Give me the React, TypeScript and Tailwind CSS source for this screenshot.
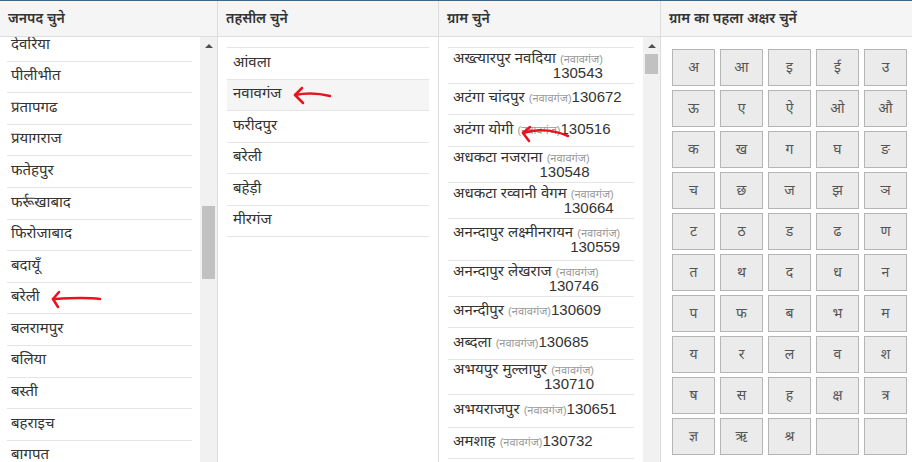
import React from "react";

const FONT = { fontFamily: '"Liberation Sans", "Noto Sans Devanagari", "Lohit Devanagari", "Noto Sans", sans-serif' };

const districts = [
  "देवरिया",
  "पीलीभीत",
  "प्रतापगढ",
  "प्रयागराज",
  "फतेहपुर",
  "फर्रूखाबाद",
  "फिरोजाबाद",
  "बदायूँ",
  "बरेली",
  "बलरामपुर",
  "बलिया",
  "बस्ती",
  "बहराइच",
  "बागपत",
];

const tehsils = ["आंवला", "नवावगंज", "फरीदपुर", "बरेली", "बहेड़ी", "मीरगंज"];

type Village = { name: string; code: string; wrap?: boolean; h: string };

const villages: Village[] = [
  { name: "अख्त्यारपुर नवदिया", code: "130543", wrap: true, h: "h-[36px]" },
  { name: "अटंगा चांदपुर", code: "130672", h: "h-[31px]" },
  { name: "अटंगा योगी", code: "130516", h: "h-[32px]" },
  { name: "अधकटा नजराना", code: "130548", wrap: true, h: "h-[36px]" },
  { name: "अधकटा रव्वानी वेगम", code: "130664", wrap: true, h: "h-[36px]" },
  { name: "अनन्दापुर लक्ष्मीनरायन", code: "130559", wrap: true, h: "h-[42px]" },
  { name: "अनन्दापुर लेखराज", code: "130746", wrap: true, h: "h-[36px]" },
  { name: "अनन्दीपुर", code: "130609", h: "h-[31px]" },
  { name: "अब्दला", code: "130685", h: "h-[32px]" },
  { name: "अभयपुर मुल्लापुर", code: "130710", wrap: true, h: "h-[35px]" },
  { name: "अभयराजपुर", code: "130651", h: "h-[33px]" },
  { name: "अमशाह", code: "130732", h: "h-[31px]" },
  { name: "अमानपुर", code: "130701", h: "h-[31px]" },
];

const letters = [
  "अ", "आ", "इ", "ई", "उ",
  "ऊ", "ए", "ऐ", "ओ", "औ",
  "क", "ख", "ग", "घ", "ङ",
  "च", "छ", "ज", "झ", "ञ",
  "ट", "ठ", "ड", "ढ", "ण",
  "त", "थ", "द", "ध", "न",
  "प", "फ", "ब", "भ", "म",
  "य", "र", "ल", "व", "श",
  "ष", "स", "ह", "क्ष", "त्र",
  "ज्ञ", "ऋ", "श्र", "", "",
];

function Header({ title }: { title: string }) {
  return (
    <div className="h-[36px] shrink-0 flex items-center px-2 bg-[#f5f5f5] border-b border-[#dddddd] text-[14px] font-semibold text-[#333]">
      {title}
    </div>
  );
}

// fake classic scrollbar
function ScrollBar({ thumbTop, thumbH }: { thumbTop: string; thumbH: string }) {
  return (
    <div className="w-[17px] shrink-0 bg-[#f1f1f1] flex flex-col items-center">
      <div className="h-[17px] w-full flex items-center justify-center">
        <div className="w-0 h-0 border-l-[4px] border-r-[4px] border-b-[4px] border-l-transparent border-r-transparent border-b-[#505050]" />
      </div>
      <div className={`${thumbTop} ${thumbH} w-[13px] bg-[#c1c1c1]`} />
    </div>
  );
}

function Arrows() {
  return (
    <svg className="absolute inset-0 pointer-events-none" width="912" height="462" viewBox="0 0 912 462">
      <g fill="none" stroke="#e8141c" strokeWidth="2.5" strokeLinecap="round" strokeLinejoin="round">
        <path d="M53 299 C 70 298, 85 297, 100 299" />
        <path d="M59 292 L53 299 L58 307" />
        <path d="M295 95 C 305 93, 318 93, 330 96" />
        <path d="M302 88 L295 95 L303 103" />
        <path d="M523 133 C 535 129, 552 129, 568 136" />
        <path d="M530 127 L523 133 L529 141" />
      </g>
    </svg>
  );
}

export default function App() {
  return (
    <div className="relative w-[912px] h-[462px] overflow-hidden bg-white text-[#333]" style={FONT}>
      <div className="h-px bg-[#3b6688]" />
      <div className="grid grid-cols-[218px_221px_222px_1fr] h-[461px]">
        {/* जनपद */}
        <div className="flex flex-col border-r border-[#dddddd] min-h-0">
          <Header title="जनपद चुने" />
          <div className="flex flex-1 min-h-0">
            <div className="flex-1 overflow-hidden pl-[7px] pr-[8px]">
              <ul className="-mt-[7px]">
                {districts.map((d) => (
                  <li key={d} className="h-[31.6px] border-b border-[#e5e5e5] flex items-center pl-[4px] pb-[3px] text-[15px]">
                    {d}
                  </li>
                ))}
              </ul>
            </div>
            <ScrollBar thumbTop="mt-[152px]" thumbH="h-[73px]" />
          </div>
        </div>

        {/* तहसील */}
        <div className="flex flex-col border-r border-[#dddddd]">
          <Header title="तहसील चुने" />
          <ul className="mt-[10px] mx-[9px] border-t border-[#e5e5e5]">
            {tehsils.map((t, i) => (
              <li
                key={t}
                className={`h-[31.5px] border-b border-[#e5e5e5] flex items-center pl-[6px] pb-[3px] text-[15px] ${i === 1 ? "bg-[#f5f5f5]" : ""}`}
              >
                {t}
              </li>
            ))}
          </ul>
        </div>

        {/* ग्राम */}
        <div className="flex flex-col border-r border-[#dddddd] min-h-0">
          <Header title="ग्राम चुने" />
          <div className="flex flex-1 min-h-0">
            <div className="flex-1 overflow-hidden pl-[9px] pr-[9px] pt-[10px]">
              <ul className="border-t border-[#e5e5e5]">
                {villages.map((v) => (
                  <li key={v.code} className={`${v.h} border-b border-[#e5e5e5] flex items-center pl-[5px] text-[15px]`}>
                    {v.wrap ? (
                      <div className="inline-flex flex-col items-end leading-[13px] pb-[2px]">
                        <span className="whitespace-nowrap">
                          {v.name} <span className="text-[11px] text-[#999]">(नवावगंज)</span>
                        </span>
                        <span>{v.code}</span>
                      </div>
                    ) : (
                      <span className="whitespace-nowrap pb-[3px]">
                        {v.name} <span className="text-[11px] text-[#999]">(नवावगंज)</span>
                        {v.code}
                      </span>
                    )}
                  </li>
                ))}
              </ul>
            </div>
            <ScrollBar thumbTop="mt-[0px]" thumbH="h-[20px]" />
          </div>
        </div>

        {/* अक्षर */}
        <div className="flex flex-col">
          <Header title="ग्राम का पहला अक्षर चुनें" />
          <div className="grid grid-cols-[repeat(5,43px)] auto-rows-[37px] gap-x-[5px] gap-y-[4px] pl-[11px] pt-[12px]">
            {letters.map((l, i) => (
              <button
                key={i}
                className="bg-[#ebebeb] border border-[#b5b5b5] text-[14px] text-[#555] flex items-center justify-center"
              >
                {l}
              </button>
            ))}
          </div>
        </div>
      </div>
      <Arrows />
    </div>
  );
}
